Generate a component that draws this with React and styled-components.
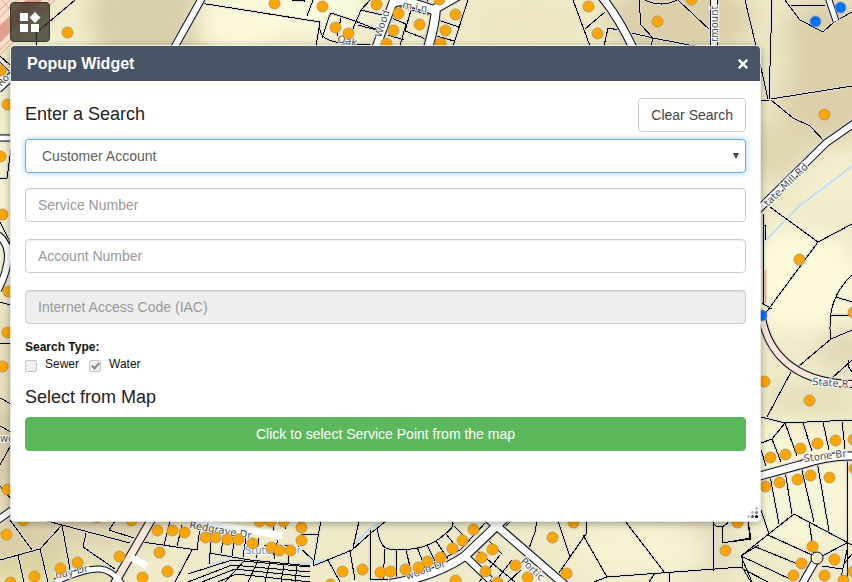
import React, { useState } from "react";
import styled, { createGlobalStyle, css } from "styled-components";

const GlobalStyle = createGlobalStyle`
  *, *::before, *::after { box-sizing: border-box; }
  body {
    margin: 0;
    font-family: "Liberation Sans", Arial, sans-serif;
    font-size: 14px;
    color: #111;
    background: #efeac8;
  }
`;

const Page = styled.main`
  position: relative;
  display: grid;
  min-height: 100vh;
  padding: 46px 92px 61px 11px;
  overflow: hidden;
`;

const MapCanvas = styled.svg`
  position: absolute;
  inset: 0;
  width: 100%;
  height: 100%;
`;

const WidgetButton = styled.button`
  position: absolute;
  top: 2px;
  left: 10px;
  display: grid;
  place-items: center;
  width: 40px;
  height: 40px;
  padding: 0;
  border: 1px solid #38352c;
  border-radius: 4px;
  background: rgba(54, 50, 38, 0.78);
  cursor: pointer;
`;

const Popup = styled.section`
  position: relative;
  display: flex;
  flex-direction: column;
  border-radius: 4px;
  background: #fff;
  box-shadow: 0 0 0 1px rgba(255, 255, 255, 0.7), 0 2px 8px rgba(0, 0, 0, 0.4);
`;

const PopupHeader = styled.header`
  display: flex;
  align-items: center;
  justify-content: space-between;
  height: 35px;
  padding: 0 12px 0 16px;
  border-radius: 4px 4px 0 0;
  background: #485566;
  color: #fff;
`;

const PopupTitle = styled.h1`
  margin: 0;
  font-size: 16px;
  line-height: 20px;
  font-weight: 700;
`;

const CloseButton = styled.button`
  display: grid;
  padding: 0;
  border: 0;
  background: none;
  color: #fff;
  cursor: pointer;
`;

const SearchForm = styled.form`
  display: flex;
  flex-direction: column;
  padding: 17px 14px 0;
`;

const HeadingRow = styled.div`
  display: flex;
  justify-content: space-between;
  margin-bottom: ${(p) => (p.$tight ? "4px" : "7px")};
`;

const Heading = styled.h2`
  margin: 0;
  font-size: 18px;
  line-height: 32px;
  font-weight: 400;
  color: #222;
`;

const controlBox = css`
  height: 34px;
  padding: 6px 12px;
  border: 1px solid #ccc;
  border-radius: 4px;
  font: 14px/20px "Liberation Sans", Arial, sans-serif;
`;

const Button = styled.button`
  ${controlBox}
  cursor: pointer;
  color: ${(p) => (p.$success ? "#fff" : "#444")};
  background: ${(p) => (p.$success ? "#5cb85c" : "#fff")};
  border-color: ${(p) => (p.$success ? "#5cb85c" : "#ccc")};
`;

const SelectWrap = styled.div`
  position: relative;
  display: grid;
  margin-bottom: 15px;
`;

const Select = styled.select`
  ${controlBox}
  appearance: none;
  padding: 6px 24px 6px 16px;
  border-color: #66afe9;
  background: #fff;
  color: #606060;
  outline: 0;
  box-shadow: 0 0 6px rgba(102, 175, 233, 0.6);
`;

const Caret = styled.svg`
  position: absolute;
  top: 14px;
  right: 7px;
  pointer-events: none;
`;

const TextInput = styled.input`
  ${controlBox}
  width: 100%;
  margin-bottom: 17px;
  background: #fff;
  color: #555;
  box-shadow: inset 0 1px 1px rgba(0, 0, 0, 0.075);
  &::placeholder { color: #999; }
  &:disabled { background: #eee; }
`;

const TypeGroup = styled.fieldset`
  display: flex;
  gap: 10px;
  min-width: 0;
  margin: 0 0 9px;
  padding: 0;
  border: 0;
  font-size: 12px;
  line-height: 16px;
`;

const TypeLegend = styled.legend`
  margin-bottom: 3px;
  padding: 0;
  line-height: 12px;
  font-weight: 700;
`;

const TypeOption = styled.label`
  display: flex;
  align-items: flex-start;
  gap: 8px;
`;

const Checkbox = styled.input`
  appearance: none;
  display: grid;
  place-items: center;
  width: 12px;
  height: 12px;
  margin: 4px 0 0;
  border: 1px solid #c6c6c6;
  border-radius: 2px;
  background: #f0f0f0;
  &:checked::after {
    content: "";
    width: 5px;
    height: 8px;
    margin-bottom: 2px;
    border: solid #8a8a8a;
    border-width: 0 2px 2px 0;
    transform: rotate(42deg);
  }
`;

const ResizeGrip = styled.svg`
  position: absolute;
  right: 1px;
  bottom: 2px;
  cursor: nwse-resize;
`;

const TERRAIN = [
  [150, 20, 60, 60, "#d9ceaa"], [240, 20, 45, 35, "#faf8d8"], [310, 10, 60, 22, "#fdfbe0"],
  [530, 25, 60, 30, "#eee8c4"], [680, 20, 75, 42, "#dcd0aa"], [830, 70, 62, 72, "#dccfaa"],
  [775, 60, 18, 38, "#eae4c0"], [780, 150, 40, 30, "#e0d6b0"], [835, 180, 40, 26, "#f3efcf"],
  [800, 280, 60, 52, "#fcfadb"], [845, 350, 30, 18, "#dfd7b5"], [810, 400, 50, 10, "#dfd8b6"],
  [780, 450, 60, 25, "#faf7d6"], [800, 500, 70, 50, "#f8f5d6"], [700, 550, 35, 30, "#dfd8b8"],
  [640, 550, 70, 30, "#f6f2d2"], [440, 550, 110, 32, "#eeeac8"], [100, 530, 60, 20, "#ddd2ae"],
  [20, 540, 50, 30, "#d9cea8"], [50, 573, 70, 12, "#ddd79a"], [0, 200, 20, 90, "#f4f1d2"],
  [0, 350, 20, 45, "#e4dcb8"], [0, 450, 20, 55, "#d6caa4"], [60, 55, 40, 32, "#f2eecd"],
  [220, 560, 60, 30, "#efebca"],
];

const PARCELS = [
  "M75 0L36 33V46", "M0 56L10 65", "M0 62L10 72", "M0 134L11 136", "M11 149L7 178H0",
  "M200 3L320 22L316 46", "M313 0L307 16", "M292 0L304 1V0", "M331 13L329 17L322 38M331 13L355 21L378 30",
  "M370 0L361 10L346 45M361 10L382 15M358 25L380 31", "M341 18L337 36", "M320 25C318 38 329 42 348 44L370 45",
  "M389 17L406 24L400 46M388 35L404 40", "M411 10L405 31L426 39M411 10L431 15L424 43", "M393 5L411 10",
  "M438 20L459 27M433 35L454 41M468 0L453 46", "M427 0L430 8M444 0L440 8",
  "M573 0L590 46M585 29L605 12M604 46L608 28L619 30", "M639 0L641 25L653 38L710 49M632 33L653 38L651 46",
  "M645 0Q662 8 677 0", "M678 0L711 31", "M745 0L756 46L768 99M772 0L769 100M761 101L769 100",
  "M771 99L852 86M771 100L793 118L810 126L825 142", "M785 0L800 20L823 32L834 22L852 12M791 6L826 5",
  "M770 207L818 242L852 224M818 242L762 318", "M763 214V305M763 225H765V240M762 303L772 309",
  "M852 275Q825 300 831 339M836 297L852 302M830 315H852M831 339L852 330M831 339L799 366",
  "M791 372L767 417M761 417L785 423L852 420M785 423L772 439L761 443M785 423L797 456",
  "M803 423L812 451M823 422L829 450M842 422L845 449M772 439L781 462M761 450L766 466",
  "M852 360L832 378M848 360V366L852 372", "M761 510L769 534M770 476L779 524M785 471L792 514M801 466L814 522M817 461L829 531M847 457V582",
  "M794 514L852 545M794 514L741 556L752 582M768 535L812 555M756 547L805 567M741 556L792 580M809 522L814 553",
  "M847 543L822 556M847 550L840 582M822 566L842 569M852 554L843 565M743 569L768 582", "M730 542L751 539L748 521",
  "M10 520L32 550M0 560L40 549L62 525L47 521M62 525L71 575M62 525L130 543M40 549L48 582M18 555L24 582",
  "M86 533L83 547L115 569M115 521L109 530L137 539M142 542L197 550L200 527M192 550L175 582",
  "M170 521L164 545M182 525L177 546M212 531L209 564M224 533L221 553M209 553L250 560L310 566",
  "M235 536L232 556M246 537L243 557M259 538L256 558M278 540L273 555", "M321 520L313 566M301 534H318M300 520L298 529M298 546L313 560",
  "M272 521L274 531M285 520V529M264 545H288V563M274 545V559",
  "M313 566L352 550L371 533L386 521M377 528Q380 548 389 549Q425 553 445 534Q456 526 452 521",
  "M370 530V579H388M359 521L353 548M350 551L355 580M328 560L340 582M385 549L383 580M396 549V580M406 550L412 575M417 547L426 570M427 545L438 567M436 541L448 559M446 534L458 549M454 526L469 541",
  "M487 521L460 550L426 567M481 533L502 554M470 545L515 582M500 533L521 552M467 563L492 582M500 555L479 582M512 560L495 582M521 570L508 582",
  "M504 527L511 521M537 521L535 532L528 551M558 521L570 557M586 521V534L570 557L556 577",
  "M583 535L607 577L742 567M594 582L607 577M649 582L655 573M669 573V582", "M625 521L665 573M713 521L714 571",
  "M748 521L750 538L723 543L722 527M713 524Q722 531 729 521M742 567L742 555L759 545M742 567L751 582",
  "M0 222L10 242M0 302L10 305M0 343H11M0 398L11 404M0 426L11 432M0 465L11 445M0 486L12 500",
];

const STRIPS = [
  "M188 574L232 560L310 567", "M188 582L232 565L310 572", "M202 582L235 569L310 577", "M218 582L236 574L310 582",
  "M245 560L225 582M258 561L248 582M270 562L265 582M284 565L281 582M297 566L295 582",
];

const ROADS = [
  ["M202 -2L174 48", 6, "#fff"], ["M395 -3L375 50", 7, "#fff"], ["M392 4Q400 -3 433 10L468 -10M436 8Q435 25 428 48", 8, "#fff"],
  ["M601 -4Q618 16 634 50", 7, "#fff"], ["M714 -3V50", 6, "#f4f1e5"], ["M828 -3L836 21", 5, "#fff"],
  ["M856 122L826 143L758 210", 6, "#fff"], ["M762 318C767 346 788 384 856 384", 6, "#f8e7da"],
  ["M756 477L800 465Q828 455 856 456", 7, "#fff"], ["M154 515L113 586", 7, "#fae8da"],
  ["M55 582Q85 568 100 569Q112 570 122 584", 5, "#fff"], ["M-2 89L14 74", 7, "#fff"],
  ["M-2 235Q18 250 -2 290M6 268L14 240", 6, "#fff"], ["M-2 138H12", 5, "#fff"], ["M-2 520L12 510", 6, "#fff"],
  ["M484 515L566 586", 7, "#fff"], ["M508 515L465 556Q436 576 390 584", 8, "#fff"],
  ["M465 556L490 580", 6, "#fff"], ["M817 558L801 586", 6, "#fff"],
];

const ORANGE = [
  [67, 32], [7, 104], [0, 70], [0, 156], [2, 214], [8, 291], [7, 332], [2, 366], [7, 489],
  [274, 3], [322, 6], [376, 4], [398, 13], [419, 24], [393, 30], [335, 27], [348, 33], [386, 43], [439, -1], [455, 14], [445, 30], [440, 43],
  [588, 6], [597, 33], [657, 21], [691, -1], [824, 114], [799, 259], [853, 312],
  [764, 381], [809, 400], [770, 457], [785, 454], [800, 448], [817, 443], [835, 440], [853, 439],
  [765, 486], [779, 482], [797, 479], [810, 475], [829, 477], [854, 468], [737, 522], [725, 550],
  [812, 546], [801, 563], [793, 575], [834, 559], [824, 575], [843, 580], [853, 571],
  [6, 534], [23, 520], [96, 517], [131, 520], [157, 530], [172, 530], [184, 532], [205, 537], [215, 537], [227, 539], [238, 539], [252, 543],
  [271, 547], [279, 550], [290, 550], [119, 556], [77, 562], [60, 568], [34, 576], [10, 582], [159, 552], [167, 571], [142, 577],
  [259, 521], [270, 521], [283, 521], [301, 527], [301, 540], [342, 571], [362, 569], [380, 572], [390, 571], [405, 569], [418, 567],
  [427, 561], [440, 557], [452, 548], [462, 540], [473, 529], [492, 549], [481, 557], [485, 571], [455, 580], [330, 584], [497, 582],
  [552, 537], [573, 522], [566, 573], [515, 565], [527, 577],
];

const BLUE = [[815, 21], [840, 7], [761, 315]];

const STREETS = [
  [381, 38, -72, "Wood"], [337, 42, 12, "Oak"], [402, 8, 10, "m i n"], [718, 42, -90, "rmount"],
  [768, 207, -44, "tate Mill Rd"], [812, 385, 4, "State R"], [804, 462, -7, "Stone Br"],
  [189, 528, 10, "Redgrave Dr"], [56, 579, -13, "nuy Dr"], [407, 580, -20, "wood Dr"],
  [520, 562, 43, "Portic"], [1, 87, -45, "Ro"], [0, 442, 0, "wo"],
];

function ParcelMap() {
  return (
    <MapCanvas viewBox="0 0 852 582" preserveAspectRatio="xMinYMin slice" aria-hidden="true">
      <defs>
        <filter id="soften" x="-50%" y="-50%" width="200%" height="200%">
          <feGaussianBlur stdDeviation="11" />
        </filter>
      </defs>
      <rect width="852" height="582" fill="#efeac8" />
      <g filter="url(#soften)">
        {TERRAIN.map(([x, y, rx, ry, fill], i) => (
          <ellipse key={i} cx={x} cy={y} rx={rx} ry={ry} fill={fill} />
        ))}
      </g>
      <path d="M0 0H54L0 54Z" fill="#f5dfcb" />
      <path d="M-4 38L42 -8" stroke="#e2a08a" strokeWidth="12" />
      <path d="M0 10L10 0M0 17L17 0M0 50L50 0M0 55L55 0M2 0L12 12M0 22L8 32M28 0V8H40" stroke="#e9a48c" fill="none" />
      <path d="M764 226V238M765 270V303" stroke="#f4b79c" strokeWidth="3" />
      <g fill="none" stroke="#bfdcf0" strokeWidth="2">
        <path d="M766 240L800 205Q820 191 852 166" />
        <path d="M210 564Q240 556 275 564Q330 565 352 549Q365 528 385 521" />
      </g>
      <g fill="none">
        {[...PARCELS, ...STRIPS].map((d, i) => <path key={i} d={d} stroke="#dad7da" strokeWidth="3" />)}
        {[...PARCELS, ...STRIPS].map((d, i) => <path key={i} d={d} stroke="#080808" strokeWidth="1" shapeRendering="crispEdges" />)}
        {ROADS.map(([d, w], i) => <path key={i} d={d} stroke="#dad7da" strokeWidth={w + 4} />)}
        {ROADS.map(([d, w], i) => <path key={i} d={d} stroke="#080808" strokeWidth={w + 2} />)}
        {ROADS.map(([d, w, fill], i) => <path key={i} d={d} stroke={fill} strokeWidth={w} />)}
        <path d="M190 521L286 536M130 557L147 566" stroke="#fff" strokeWidth="7" />
      </g>
      <g fill="#efebca" stroke="#080808">
        <circle cx="289" cy="536" r="7" stroke="none" />
        <circle cx="817" cy="558" r="6" />
      </g>
      <g fontFamily="DejaVu Sans, sans-serif" fontSize="10" fill="#4c4c4c" stroke="#fff" strokeWidth="2" paintOrder="stroke">
        {STREETS.map(([x, y, angle, name]) => (
          <text key={name} transform={`translate(${x} ${y}) rotate(${angle})`}>{name}</text>
        ))}
        <text x="245" y="554" fill="#668cad">Stute River</text>
      </g>
      <g stroke="#b8995a" strokeWidth="1" fill="#ffa500">
        {ORANGE.map(([x, y], i) => <circle key={i} cx={x + 0.5} cy={y + 0.5} r="5.5" />)}
      </g>
      <g stroke="#829bb0" strokeWidth="1" fill="#0070ff">
        {BLUE.map(([x, y], i) => <circle key={i} cx={x + 0.5} cy={y + 0.5} r="5.5" />)}
      </g>
    </MapCanvas>
  );
}

export default function App() {
  const empty = { type: "customer", service: "", account: "" };
  const [search, setSearch] = useState(empty);
  const update = (key) => (event) => setSearch({ ...search, [key]: event.target.value });

  return (
    <Page>
      <GlobalStyle />
      <ParcelMap />
      <WidgetButton type="button" aria-label="Widgets">
        <svg width="21" height="20" viewBox="0 0 21 20" fill="#fff" aria-hidden="true">
          <path d="M0 1h8v8H0zM0 12h8v8H0zM11 12h8v8h-8zM15 0l5.500 5.500-5.500 5.500-5.500-5.500z" />
        </svg>
      </WidgetButton>
      <Popup aria-labelledby="popup-title">
        <PopupHeader>
          <PopupTitle id="popup-title">Popup Widget</PopupTitle>
          <CloseButton type="button" aria-label="Close">
            <svg width="10" height="10" viewBox="0 0 10 10" fill="none" stroke="currentColor" strokeWidth="2.4" aria-hidden="true">
              <path d="M0.7 0.7L9.3 9.3M9.3 0.7L0.7 9.3" />
            </svg>
          </CloseButton>
        </PopupHeader>
        <SearchForm onSubmit={(event) => event.preventDefault()}>
          <HeadingRow>
            <Heading>Enter a Search</Heading>
            <Button type="button" onClick={() => setSearch(empty)}>Clear Search</Button>
          </HeadingRow>
          <SelectWrap>
            <Select aria-label="Search by" value={search.type} onChange={update("type")}>
              <option value="customer">Customer Account</option>
            </Select>
            <Caret width="6" height="6" viewBox="0 0 6 6" fill="#444" aria-hidden="true">
              <path d="M0 0h6L3 6z" />
            </Caret>
          </SelectWrap>
          <TextInput aria-label="Service Number" placeholder="Service Number" value={search.service} onChange={update("service")} />
          <TextInput aria-label="Account Number" placeholder="Account Number" value={search.account} onChange={update("account")} />
          <TextInput aria-label="Internet Access Code (IAC)" placeholder="Internet Access Code (IAC)" disabled />
          <TypeGroup>
            <TypeLegend>Search Type:</TypeLegend>
            <TypeOption><Checkbox type="checkbox" disabled />Sewer</TypeOption>
            <TypeOption><Checkbox type="checkbox" defaultChecked disabled />Water</TypeOption>
          </TypeGroup>
          <HeadingRow $tight><Heading>Select from Map</Heading></HeadingRow>
          <Button type="button" $success>Click to select Service Point from the map</Button>
        </SearchForm>
        <ResizeGrip width="12" height="12" viewBox="0 0 12 12" aria-hidden="true">
          <g fill="#bbb"><circle cx="9.5" cy="1.5" r="1.4" /><circle cx="5.5" cy="5.5" r="1.4" /><circle cx="1.5" cy="9.5" r="1.4" /></g>
          <circle cx="9.5" cy="5.5" r="1.5" fill="#777" />
          <circle cx="5.5" cy="9.5" r="1.5" fill="#555" />
          <circle cx="9.5" cy="9.5" r="1.6" fill="#000" />
        </ResizeGrip>
      </Popup>
    </Page>
  );
}
